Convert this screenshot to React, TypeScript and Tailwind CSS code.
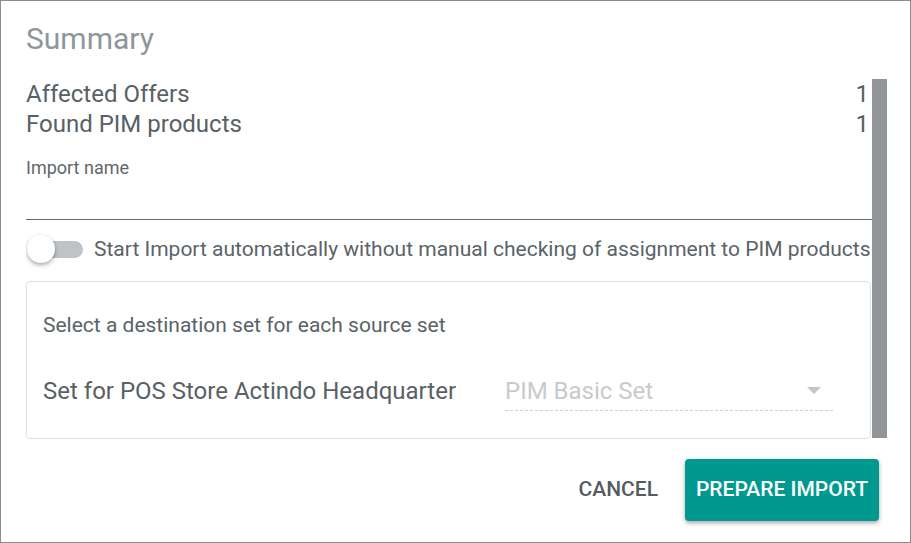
const font = { fontFamily: "Roboto, 'Liberation Sans', sans-serif" };

const SummaryRow = ({ label, value }: { label: string; value: string }) => (
  <div className="flex h-[30px] items-center justify-between pr-[3px] text-[24px] text-[#586166]">
    <span>{label}</span>
    <span>{value}</span>
  </div>
);

const Toggle = () => (
  <div className="relative h-[28px] w-[58px] shrink-0">
    <div className="absolute left-[3px] top-[6px] h-[17px] w-[54px] rounded-full bg-[#bfc3c5]" />
    <div className="absolute left-[1px] top-0 h-[28px] w-[28px] rounded-full bg-white shadow-[0_2px_4px_rgba(0,0,0,0.35)]" />
  </div>
);

export default function App() {
  return (
    <div
      className="h-[543px] w-[911px] border border-[#8c8c8c] bg-white"
      style={font}
    >
      <div className="pl-[25px]">
        <h2 className="pt-[20px] text-[30px] leading-[36px] text-[#8d979b]">Summary</h2>

        <div className="mt-[22px] flex">
          <div className="h-[360px] w-[846px] overflow-hidden">
            <SummaryRow label="Affected Offers" value="1" />
            <SummaryRow label="Found PIM products" value="1" />

            <div className="mt-[19px]">
              <label className="block text-[18px] leading-[20px] text-[#5f676c]">Import name</label>
              <div className="h-[42px] border-b border-[#666b6e]" />
            </div>

            <div className="mt-[15px] flex h-[28px] items-center gap-[10px]">
              <Toggle />
              <span className="whitespace-nowrap text-[21px] leading-[28px] text-[#5a6368]">
                Start Import automatically without manual checking of assignment to PIM products
              </span>
            </div>

            <div className="mt-[18px] h-[158px] w-[845px] rounded-[4px] border border-[#e0e0e0] px-[16px]">
              <p className="pt-[31px] text-[21px] leading-[24px] text-[#5a6368]">
                Select a destination set for each source set
              </p>
              <div className="mt-[34px] flex items-center">
                <span className="w-[462px] text-[24px] text-[#586166]">
                  Set for POS Store Actindo Headquarter
                </span>
                <div className="flex h-[40px] w-[328px] items-center justify-between border-b border-dashed border-[#cfd2d3] pr-[12px]">
                  <span className="text-[24px] text-[#c8cbcc]">PIM Basic Set</span>
                  <svg width="14" height="8" viewBox="0 0 14 8">
                    <path d="M0 0 L14 0 L7 7 Z" fill="#c3c6c7" />
                  </svg>
                </div>
              </div>
            </div>
          </div>
          <div className="h-[359px] w-[15px] bg-[#939699]" />
        </div>

        <div className="mt-[20px] flex items-center justify-end gap-[7px] pr-[31px]">
          <button className="px-[20px] text-[21px] font-medium text-[#535c61]">CANCEL</button>
          <button className="h-[62px] w-[194px] rounded-[4px] bg-[#009990] text-[21px] font-medium text-white shadow-[0_2px_4px_rgba(0,0,0,0.35)]">
            PREPARE IMPORT
          </button>
        </div>
      </div>
    </div>
  );
}
